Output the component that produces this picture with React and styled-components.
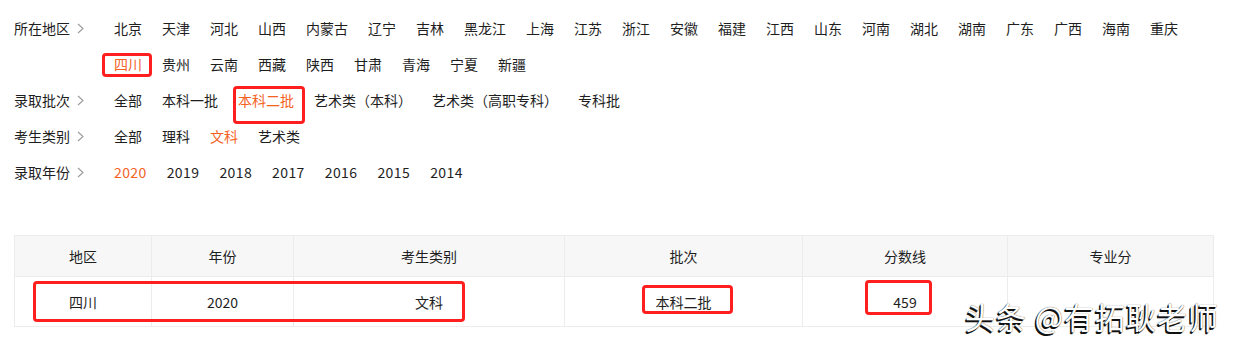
import React from 'react'
import styled, { createGlobalStyle } from 'styled-components'

const GlobalStyle = createGlobalStyle`
  body {
    margin: 0;
    background: #fff;
    font-family: "Noto Sans CJK SC", "Noto Sans", sans-serif;
    color: #1e1e1e;
  }
`;

const Page = styled.div`
  position: relative;
  width: 1233px;
  height: 347px;
  overflow: hidden;
  padding: 10px 0 0 14px;
  box-sizing: border-box;
`;

const Filters = styled.div`
  display: flex;
  flex-direction: column;
  width: 1199px;
`;

const FilterRow = styled.div`
  display: flex;
  align-items: flex-start;
  font-size: 14px;
  line-height: 36px;
`;

const Label = styled.div`
  flex: 0 0 100px;
  display: flex;
  align-items: center;
  height: 36px;
  gap: 7px;
  color: #1e1e1e;
`;

const Items = styled.div`
  display: flex;
  flex-wrap: wrap;
  column-gap: 20px;
  flex: 1;
`;

const Item = styled.span`
  position: relative;
  white-space: nowrap;
  color: ${p => (p.$active ? '#f5621f' : '#1e1e1e')};
  letter-spacing: ${p => (p.$num ? '0.4px' : '0')};
`;

const Mark = styled.span`
  position: absolute;
  top: ${p => p.$t}px;
  bottom: ${p => p.$b}px;
  left: ${p => p.$l}px;
  right: ${p => p.$r}px;
  border: 3px solid #ff1f1f;
  border-radius: 4px;
  pointer-events: none;
`;

const TableWrap = styled.div`
  position: relative;
  margin-top: 45px;
  width: 1199px;
`;

const Table = styled.table`
  width: 100%;
  border-collapse: collapse;
  table-layout: fixed;
  font-size: 14px;
  color: #1e1e1e;
`;

const Th = styled.th`
  height: 40px;
  padding: 0;
  font-weight: normal;
  background: #f7f7f7;
  border: 1px solid #ececec;
  text-align: center;
`;

const Td = styled.td`
  height: 49px;
  padding: 0;
  border: 1px solid #ececec;
  text-align: center;
`;

const Watermark = styled.div`
  position: absolute;
  left: 965px;
  top: 296px;
  font-size: 30px;
  line-height: 40px;
  letter-spacing: 1px;
  color: #fff;
  white-space: nowrap;
  text-shadow: -1.5px 1.5px 0 #111, -1px 1px 1px #222, 0 0 1px #333;
`;

const Chevron = () => (
  <svg width="7" height="11" viewBox="0 0 7 11">
    <polyline points="1,1 6,5.5 1,10" fill="none" stroke="#9a9a9a" strokeWidth="1.1" />
  </svg>
)

const regions = ['北京', '天津', '河北', '山西', '内蒙古', '辽宁', '吉林', '黑龙江', '上海', '江苏', '浙江', '安徽', '福建', '江西', '山东', '河南', '湖北', '湖南', '广东', '广西', '海南', '重庆', '四川', '贵州', '云南', '西藏', '陕西', '甘肃', '青海', '宁夏', '新疆']
const batches = ['全部', '本科一批', '本科二批', '艺术类（本科）', '艺术类（高职专科）', '专科批']
const kinds = ['全部', '理科', '文科', '艺术类']
const years = ['2020', '2019', '2018', '2017', '2016', '2015', '2014']

const marks = {
  '四川': { $t: 7, $b: 5, $l: -12, $r: -10 },
  '本科二批': { $t: 4, $b: -6, $l: -5, $r: -11 },
}

const rows = [
  { label: '所在地区', items: regions, active: '四川' },
  { label: '录取批次', items: batches, active: '本科二批' },
  { label: '考生类别', items: kinds, active: '文科' },
  { label: '录取年份', items: years, active: '2020', num: true },
]

const columns = [
  { title: '地区', width: 137, value: '四川' },
  { title: '年份', width: 142, value: '2020' },
  { title: '考生类别', width: 271, value: '文科' },
  { title: '批次', width: 238, value: '本科二批' },
  { title: '分数线', width: 205, value: '459' },
  { title: '专业分', width: 206, value: '' },
]

const tableMarks = [
  { $t: 46, $l: 19, w: 432, h: 41 },
  { $t: 50, $l: 628, w: 91, h: 29 },
  { $t: 45, $l: 851, w: 67, h: 35 },
]

const TableMark = styled.span`
  position: absolute;
  top: ${p => p.$t}px;
  left: ${p => p.$l}px;
  width: ${p => p.$w}px;
  height: ${p => p.$h}px;
  box-sizing: border-box;
  border: 3px solid #ff1f1f;
  border-radius: 4px;
`;

export default function App() {
  return (
    <Page>
      <GlobalStyle />
      <Filters>
        {rows.map(row => (
          <FilterRow key={row.label}>
            <Label>
              {row.label}
              <Chevron />
            </Label>
            <Items>
              {row.items.map(it => (
                <Item key={it} $active={it === row.active} $num={row.num}>
                  {it}
                  {marks[it] && <Mark {...marks[it]} />}
                </Item>
              ))}
            </Items>
          </FilterRow>
        ))}
      </Filters>

      <TableWrap>
        <Table>
          <colgroup>
            {columns.map(c => <col key={c.title} style={{ width: c.width }} />)}
          </colgroup>
          <thead>
            <tr>
              {columns.map(c => <Th key={c.title}>{c.title}</Th>)}
            </tr>
          </thead>
          <tbody>
            <tr>
              {columns.map(c => <Td key={c.title}>{c.value}</Td>)}
            </tr>
          </tbody>
        </Table>
        {tableMarks.map((m, i) => (
          <TableMark key={i} $t={m.$t} $l={m.$l} $w={m.w} $h={m.h} />
        ))}
      </TableWrap>

      <Watermark>头条 @有拓耿老师</Watermark>
    </Page>
  )
}
